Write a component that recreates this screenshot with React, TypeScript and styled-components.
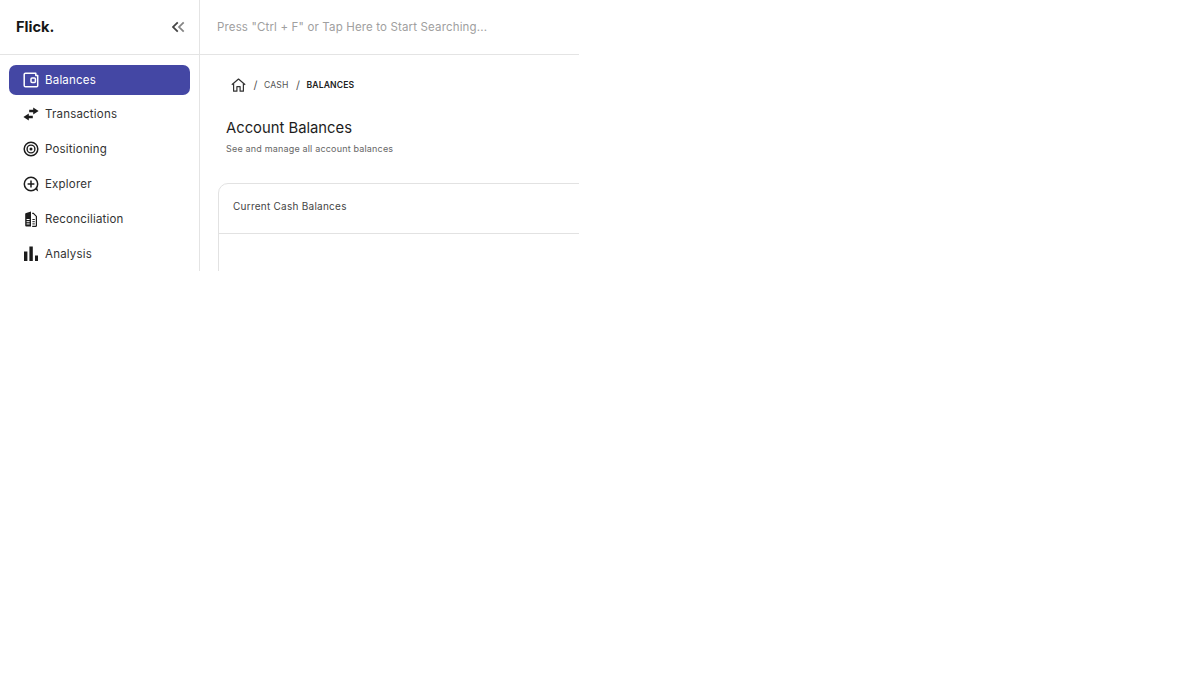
import React from 'react'
import styled, {createGlobalStyle} from 'styled-components'

const GlobalStyle = createGlobalStyle`
  html, body {
    margin: 0;
    padding: 0;
    background: #ffffff;
    font-family: Inter, "Liberation Sans", sans-serif;
  }
`

const WalletIcon = () => (
  <svg width="16" height="16" viewBox="0 0 16 16" fill="none" stroke="currentColor" strokeWidth="1.5">
    <path d="M2.5 1.2h10.3v2.2h1.9v10.4a1 1 0 0 1-1 1H2.5a1.3 1.3 0 0 1-1.3-1.3V2.5a1.3 1.3 0 0 1 1.3-1.3z" strokeLinejoin="round" />
    <rect x="8" y="6" width="4.4" height="4.6" rx="1" />
  </svg>
)

const SwapIcon = () => (
  <svg width="16" height="14" viewBox="0 0 16 14" fill="currentColor">
    <path d="M10.2 0.6 15.6 4 10.2 7.4V5.3H6.2V2.7h4z" />
    <path d="M5.8 6.6 0.4 10l5.4 3.4v-2.1h4V8.7h-4z" />
  </svg>
)

const TargetIcon = () => (
  <svg width="16" height="16" viewBox="0 0 16 16" fill="none" stroke="currentColor">
    <circle cx="8" cy="8" r="6.8" strokeWidth="1.5" />
    <circle cx="8" cy="8" r="3.9" strokeWidth="1.4" />
    <circle cx="8" cy="8" r="1.5" fill="currentColor" stroke="none" />
  </svg>
)

const ExplorerIcon = () => (
  <svg width="16" height="16" viewBox="0 0 16 16" fill="none" stroke="currentColor" strokeWidth="1.5">
    <circle cx="8" cy="8" r="6.7" />
    <path d="M8 4.6v6.8M4.6 8h6.8" />
    <path d="M12 13.2 15.2 15.6 14.2 11.8z" fill="currentColor" stroke="none" />
  </svg>
)

const ReconcileIcon = () => (
  <svg width="12" height="16" viewBox="0 0 12 16">
    <path d="M1.2 2 6 .4v15.2H1.2a1 1 0 0 1-1-1V3a1 1 0 0 1 1-1z" fill="currentColor" />
    <path d="M1.6 8.5h3M1.6 10.7h3M1.6 12.9h3" stroke="#fff" strokeWidth="1" />
    <path d="M7.2 2.4h1.2l3 3v9.4a.5.5 0 0 1-.5.5H7.2" fill="none" stroke="currentColor" strokeWidth="1.2" />
    <path d="M7.4 8.5h2.4M7.4 10.7h2.4M7.4 12.9h2.4" stroke="currentColor" strokeWidth="1" />
  </svg>
)

const BarsIcon = () => (
  <svg width="14" height="15" viewBox="0 0 14 15" fill="currentColor">
    <rect x="0" y="5.5" width="3.4" height="9.5" />
    <rect x="5.4" y="0.5" width="3.4" height="14.5" />
    <rect x="11" y="9.5" width="3" height="5.5" />
  </svg>
)

const HomeIcon = () => (
  <svg width="15" height="14" viewBox="0 0 15 14" fill="none" stroke="currentColor" strokeWidth="1.2" strokeLinejoin="round">
    <path d="M.8 6.8 7.5 1l6.7 5.8" />
    <path d="M2.6 5.6v7.6h3.3V8.6h3.2v4.6h3.3V5.6" />
  </svg>
)

const CollapseIcon = () => (
  <svg width="13" height="12" viewBox="0 0 14 12" fill="none" strokeWidth="1.9">
    <path d="M6.2 1 1.2 6l5 5" stroke="#444" />
    <path d="M12.6 1 7.6 6l5 5" stroke="#858585" />
  </svg>
)

const navItems = [
  {label: 'Balances', icon: <WalletIcon />, active: true},
  {label: 'Transactions', icon: <SwapIcon />},
  {label: 'Positioning', icon: <TargetIcon />},
  {label: 'Explorer', icon: <ExplorerIcon />},
  {label: 'Reconciliation', icon: <ReconcileIcon />},
  {label: 'Analysis', icon: <BarsIcon />},
]

const App = () => {
  return (
    <Frame>
      <GlobalStyle />
      <Sidebar>
        <Brand>
          <Logo>Flick.</Logo>
          <CollapseIcon />
        </Brand>
        <Nav>
          {navItems.map((item) => (
            <NavItem key={item.label} $active={item.active}>
              <NavIcon>{item.icon}</NavIcon>
              {item.label}
            </NavItem>
          ))}
        </Nav>
      </Sidebar>
      <Main>
        <SearchBar>Press "Ctrl + F" or Tap Here to Start Searching...</SearchBar>
        <Content>
          <Breadcrumb>
            <HomeIcon />
            <Slash>/</Slash>
            <Crumb>CASH</Crumb>
            <Slash>/</Slash>
            <Crumb $current>BALANCES</Crumb>
          </Breadcrumb>
          <Title>Account Balances</Title>
          <Subtitle>See and manage all account balances</Subtitle>
          <Card>
            <CardHeader>Current Cash Balances</CardHeader>
          </Card>
        </Content>
      </Main>
    </Frame>
  )
}

export default App

const Frame = styled.div`
  display: flex;
  width: 579px;
  height: 271px;
  overflow: hidden;
`

const Sidebar = styled.aside`
  flex: 0 0 200px;
  box-sizing: border-box;
  border-right: 1px solid #e4e4e4;
`

const Brand = styled.div`
  box-sizing: border-box;
  height: 55px;
  padding: 0 14px 1px 16px;
  display: flex;
  align-items: center;
  justify-content: space-between;
  border-bottom: 1px solid #e4e4e4;
`

const Logo = styled.div`
  font-size: 14.6px;
  font-weight: 700;
  color: #161616;
`

const Nav = styled.nav`
  display: flex;
  flex-direction: column;
  gap: 4.8px;
  padding: 9.6px 9px 0;
`

const NavItem = styled.div<{$active?: boolean}>`
  box-sizing: border-box;
  height: 30px;
  padding-left: 14px;
  display: flex;
  align-items: center;
  gap: 6px;
  border-radius: 7px;
  font-size: 11.5px;
  letter-spacing: 0.2px;
  background: ${(p) => (p.$active ? '#4447a4' : 'transparent')};
  color: ${(p) => (p.$active ? '#ffffff' : '#333333')};
`

const NavIcon = styled.span`
  flex: 0 0 16px;
  height: 16px;
  display: flex;
  align-items: center;
  justify-content: center;
  color: #1c1c1c;

  ${NavItem}:first-child & {
    color: #ffffff;
  }
`

const Main = styled.main`
  flex: 1;
  min-width: 0;
`

const SearchBar = styled.div`
  box-sizing: border-box;
  height: 55px;
  padding: 0 0 1px 17px;
  display: flex;
  align-items: center;
  border-bottom: 1px solid #e4e4e4;
  font-size: 11.5px;
  letter-spacing: 0.15px;
  color: #a0a0a0;
  white-space: nowrap;
`

const Content = styled.div`
  padding: 22.5px 0 0 18px;
`

const Breadcrumb = styled.div`
  display: flex;
  align-items: center;
  height: 14px;
  padding-left: 13px;
  color: #333333;
`

const Slash = styled.span`
  margin: 0 6.5px 0 7.5px;
  font-size: 11px;
  color: #555555;
`

const Crumb = styled.span<{$current?: boolean}>`
  font-size: 8.6px;
  letter-spacing: 0.15px;
  font-weight: ${(p) => (p.$current ? 600 : 400)};
  color: ${(p) => (p.$current ? '#222222' : '#555555')};
`

const Title = styled.h1`
  margin: 26px 0 0 8px;
  font-size: 14.8px;
  line-height: 20px;
  font-weight: 400;
  color: #1d1d1d;
`

const Subtitle = styled.p`
  margin: 4px 0 0 8px;
  font-size: 9px;
  line-height: 13px;
  letter-spacing: 0.18px;
  color: #666666;
`

const Card = styled.section`
  box-sizing: border-box;
  margin-top: 28px;
  width: 500px;
  height: 200px;
  border: 1px solid #e2e2e2;
  border-radius: 10px;
`

const CardHeader = styled.div`
  box-sizing: border-box;
  height: 50px;
  padding: 0 0 5px 14px;
  display: flex;
  align-items: center;
  border-bottom: 1px solid #e2e2e2;
  font-size: 10px;
  letter-spacing: 0.25px;
  color: #444444;
`
